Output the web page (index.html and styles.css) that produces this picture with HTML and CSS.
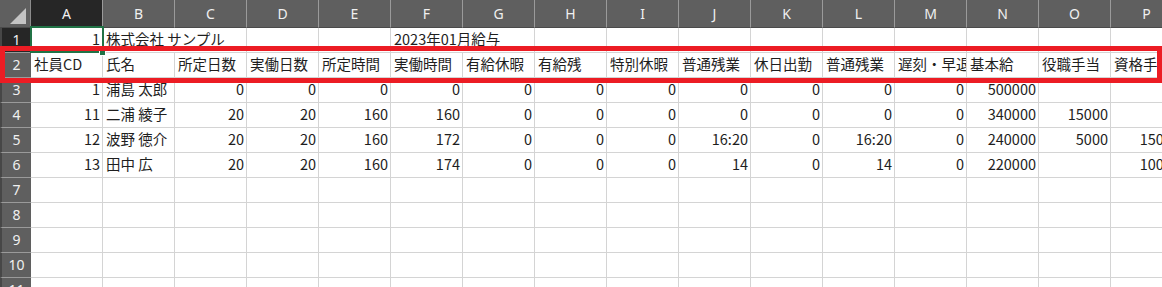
FILE: index.html
```html
<!DOCTYPE html>
<html lang="ja">
<head>
<meta charset="utf-8">
<title>給与シート</title>
<link rel="stylesheet" href="styles.css">
</head>
<body>
<div class="sheet">
  <div class="corner"><svg width="31" height="28" viewBox="0 0 31 28"><polygon points="26,8 26,24 10,24" fill="#c4c4c4"/></svg></div>
  <div class="ch sel">A</div><div class="ch">B</div><div class="ch">C</div><div class="ch">D</div><div class="ch">E</div><div class="ch">F</div><div class="ch">G</div><div class="ch">H</div><div class="ch">I</div><div class="ch">J</div><div class="ch">K</div><div class="ch">L</div><div class="ch">M</div><div class="ch">N</div><div class="ch">O</div><div class="ch">P</div>

  <div class="rh sel">1</div>
  <div class="c n">1</div><div class="c span2">株式会社 サンプル</div><div class="c"></div><div class="c"></div><div class="c span2">2023年01月給与</div><div class="c"></div><div class="c"></div><div class="c"></div><div class="c"></div><div class="c"></div><div class="c"></div><div class="c"></div><div class="c"></div><div class="c"></div>

  <div class="rh">2</div>
  <div class="c">社員CD</div><div class="c">氏名</div><div class="c">所定日数</div><div class="c">実働日数</div><div class="c">所定時間</div><div class="c">実働時間</div><div class="c">有給休暇</div><div class="c">有給残</div><div class="c">特別休暇</div><div class="c">普通残業</div><div class="c">休日出勤</div><div class="c">普通残業</div><div class="c">遅刻・早退</div><div class="c">基本給</div><div class="c">役職手当</div><div class="c">資格手当</div>

  <div class="rh">3</div>
  <div class="c n">1</div><div class="c">浦島 太郎</div><div class="c n">0</div><div class="c n">0</div><div class="c n">0</div><div class="c n">0</div><div class="c n">0</div><div class="c n">0</div><div class="c n">0</div><div class="c n">0</div><div class="c n">0</div><div class="c n">0</div><div class="c n">0</div><div class="c n">500000</div><div class="c"></div><div class="c"></div>

  <div class="rh">4</div>
  <div class="c n">11</div><div class="c">二浦 綾子</div><div class="c n">20</div><div class="c n">20</div><div class="c n">160</div><div class="c n">160</div><div class="c n">0</div><div class="c n">0</div><div class="c n">0</div><div class="c n">0</div><div class="c n">0</div><div class="c n">0</div><div class="c n">0</div><div class="c n">340000</div><div class="c n">15000</div><div class="c"></div>

  <div class="rh">5</div>
  <div class="c n">12</div><div class="c">波野 徳介</div><div class="c n">20</div><div class="c n">20</div><div class="c n">160</div><div class="c n">172</div><div class="c n">0</div><div class="c n">0</div><div class="c n">0</div><div class="c n">16:20</div><div class="c n">0</div><div class="c n">16:20</div><div class="c n">0</div><div class="c n">240000</div><div class="c n">5000</div><div class="c n">15000</div>

  <div class="rh">6</div>
  <div class="c n">13</div><div class="c">田中 広</div><div class="c n">20</div><div class="c n">20</div><div class="c n">160</div><div class="c n">174</div><div class="c n">0</div><div class="c n">0</div><div class="c n">0</div><div class="c n">14</div><div class="c n">0</div><div class="c n">14</div><div class="c n">0</div><div class="c n">220000</div><div class="c"></div><div class="c n">10000</div>

  <div class="rh">7</div>
  <div class="c"></div><div class="c"></div><div class="c"></div><div class="c"></div><div class="c"></div><div class="c"></div><div class="c"></div><div class="c"></div><div class="c"></div><div class="c"></div><div class="c"></div><div class="c"></div><div class="c"></div><div class="c"></div><div class="c"></div><div class="c"></div>

  <div class="rh">8</div>
  <div class="c"></div><div class="c"></div><div class="c"></div><div class="c"></div><div class="c"></div><div class="c"></div><div class="c"></div><div class="c"></div><div class="c"></div><div class="c"></div><div class="c"></div><div class="c"></div><div class="c"></div><div class="c"></div><div class="c"></div><div class="c"></div>

  <div class="rh">9</div>
  <div class="c"></div><div class="c"></div><div class="c"></div><div class="c"></div><div class="c"></div><div class="c"></div><div class="c"></div><div class="c"></div><div class="c"></div><div class="c"></div><div class="c"></div><div class="c"></div><div class="c"></div><div class="c"></div><div class="c"></div><div class="c"></div>

  <div class="rh">10</div>
  <div class="c"></div><div class="c"></div><div class="c"></div><div class="c"></div><div class="c"></div><div class="c"></div><div class="c"></div><div class="c"></div><div class="c"></div><div class="c"></div><div class="c"></div><div class="c"></div><div class="c"></div><div class="c"></div><div class="c"></div><div class="c"></div>

  <div class="rh">11</div>
  <div class="c"></div><div class="c"></div><div class="c"></div><div class="c"></div><div class="c"></div><div class="c"></div><div class="c"></div><div class="c"></div><div class="c"></div><div class="c"></div><div class="c"></div><div class="c"></div><div class="c"></div><div class="c"></div><div class="c"></div><div class="c"></div>

  <div class="selbox"></div>
  <div class="handle"></div>
  <div class="highlight"></div>
</div>
</body>
</html>
```
FILE: styles.css
```css
* { box-sizing: border-box; }
html, body {
  margin: 0;
  padding: 0;
  width: 1162px;
  height: 287px;
  overflow: hidden;
  background: #ffffff;
}
body {
  font-family: "Noto Sans CJK JP", "Noto Sans", sans-serif;
}
.sheet {
  position: relative;
  display: grid;
  grid-template-columns: 31px repeat(16, 72px);
  grid-template-rows: 28px;
  grid-auto-rows: 25px;
  width: max-content;
}
.corner {
  background: #5f5f5f;
  border-right: 1px solid #8c8c8c;
  border-bottom: 1px solid #4a4a4a;
}
.corner svg { display: block; }
.ch {
  background: #5f5f5f;
  color: #f0f0f0;
  font-family: "Noto Sans", "Open Sans", sans-serif;
  font-size: 14px;
  line-height: 27px;
  text-align: center;
  border-right: 1px solid #9a9a9a;
  border-bottom: 1px solid #4a4a4a;
}
.ch.sel { background: #262626; }
.rh {
  background: #5f5f5f;
  color: #f0f0f0;
  font-family: "Noto Sans", "Open Sans", sans-serif;
  font-size: 14px;
  line-height: 24px;
  text-align: center;
  border-left: 2px solid #474747;
  border-bottom: 1px solid #9a9a9a;
}
.rh.sel { background: #262626; }
.c {
  border-right: 1px solid #d4d4d4;
  border-bottom: 1px solid #d4d4d4;
  font-size: 14.5px;
  line-height: 22px;
  padding: 0 2px 0 3px;
  white-space: nowrap;
  overflow: hidden;
  color: #1e1e1e;
}
.n { text-align: right; }
.span2 { grid-column: span 2; }
.selbox {
  position: absolute;
  left: 30px;
  top: 26px;
  width: 74px;
  height: 27px;
  border: 2px solid #217346;
}
.handle {
  position: absolute;
  left: 99px;
  top: 49px;
  width: 7px;
  height: 7px;
  background: #217346;
  border: 1px solid #ffffff;
}
.highlight {
  position: absolute;
  left: 0;
  top: 46px;
  width: 1162px;
  height: 37px;
  border: 5px solid #ec1c24;
}
```
